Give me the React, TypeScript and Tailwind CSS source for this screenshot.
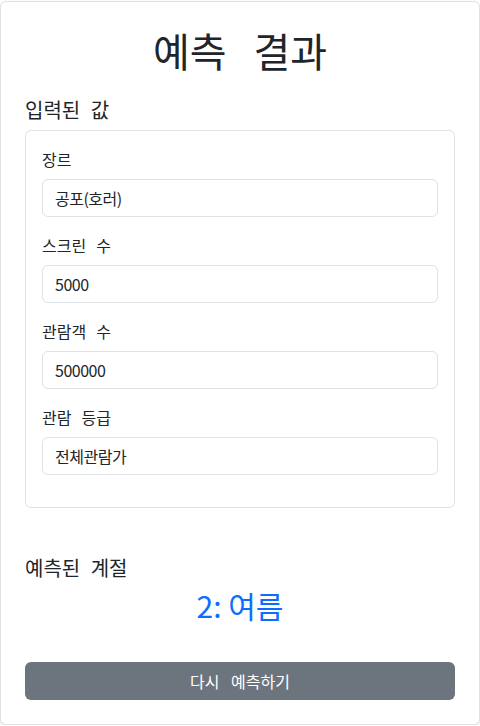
import React from 'react';

interface Field {
  label: string;
  value: string;
}

const fields: Field[] = [
  { label: '장르', value: '공포(호러)' },
  { label: '스크린 수', value: '5000' },
  { label: '관람객 수', value: '500000' },
  { label: '관람 등급', value: '전체관람가' },
];

const App: React.FC = () => {
  return (
    <div
      className="w-[480px] pt-px text-[#212529]"
      style={{ fontFamily: '"Noto Sans CJK KR", "Noto Sans", sans-serif' }}
    >
      <div className="border border-[#dee2e6] rounded-md bg-white p-6 shadow-sm">
        {/* Title */}
        <h1 className="text-[40px] leading-[48px] text-center mb-6 [word-spacing:0.45em]">예측 결과</h1>

        {/* Input values */}
        <h5 className="text-[20px] leading-[24px] mb-2 [word-spacing:0.3em]">입력된 값</h5>
        <div className="border border-[#dee2e6] rounded-md p-4">
          {fields.map((field) => (
            <div key={field.label} className="mb-4">
              <label className="block text-[16px] leading-[24px] mb-2 [word-spacing:0.4em]">{field.label}</label>
              <input
                readOnly
                value={field.value}
                className="block w-full h-[38px] px-3 border border-[#dee2e6] rounded-md text-[16px] text-[#212529] bg-white outline-none tracking-[-0.5px]"
              />
            </div>
          ))}
        </div>

        {/* Result */}
        <h5 className="text-[20px] leading-[24px] mt-12 mb-2 [word-spacing:0.3em]">예측된 계절</h5>
        <h3 className="text-[30px] leading-[34px] text-center text-[#0d6efd]">2: 여름</h3>

        <button className="mt-10 w-full h-[38px] rounded-md bg-[#6c757d] text-white text-[16px] [word-spacing:0.5em]">
          다시 예측하기
        </button>
      </div>
    </div>
  );
};

export default App;
